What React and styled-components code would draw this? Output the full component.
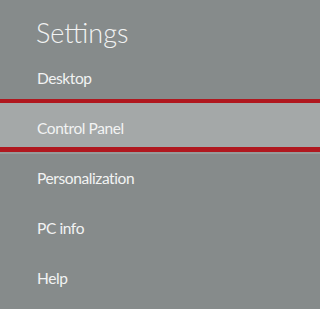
import React from 'react';
import styled, { createGlobalStyle } from 'styled-components';

const Global = createGlobalStyle`
  html, body { margin: 0; padding: 0; background: #868b8b; }
  body { font-family: Lato, "Open Sans", sans-serif; }
`;

const Panel = styled.div`
  width: 100%;
  height: 309px;
  background: #868b8b;
  color: #f2f3f3;
  overflow: hidden;
`;

const Title = styled.h1`
  margin: 0;
  height: 52px;
  box-sizing: border-box;
  padding: 17px 0 0 36px;
  font-size: 27px;
  line-height: 32px;
  font-weight: 300;
`;

const List = styled.ul`
  list-style: none;
  margin: 0;
  padding: 0;
`;

const Item = styled.li`
  box-sizing: border-box;
  height: ${p => (p.$active ? '53px' : '50px')};
  margin-top: ${p => (p.$active ? '-3px' : '0')};
  padding: ${p => (p.$active ? '15px' : '16px')} 0 0 37px;
  font-size: 15.5px;
  line-height: 20px;
  letter-spacing: -0.4px;
  background: ${p => (p.$active ? '#a4a8a8' : 'transparent')};
  border-top: ${p => (p.$active ? '4px solid #b0181f' : 'none')};
  border-bottom: ${p => (p.$active ? '5px solid #b0181f' : 'none')};
  box-shadow: ${p => (p.$active ? '0 2px 0 #979b9b' : 'none')};
`;

const items = ['Desktop', 'Control Panel', 'Personalization', 'PC info', 'Help'];

export default function App() {
  return (
    <Panel>
      <Global />
      <Title>Settings</Title>
      <List>
        {items.map(label => (
          <Item key={label} $active={label === 'Control Panel'}>{label}</Item>
        ))}
      </List>
    </Panel>
  );
}
